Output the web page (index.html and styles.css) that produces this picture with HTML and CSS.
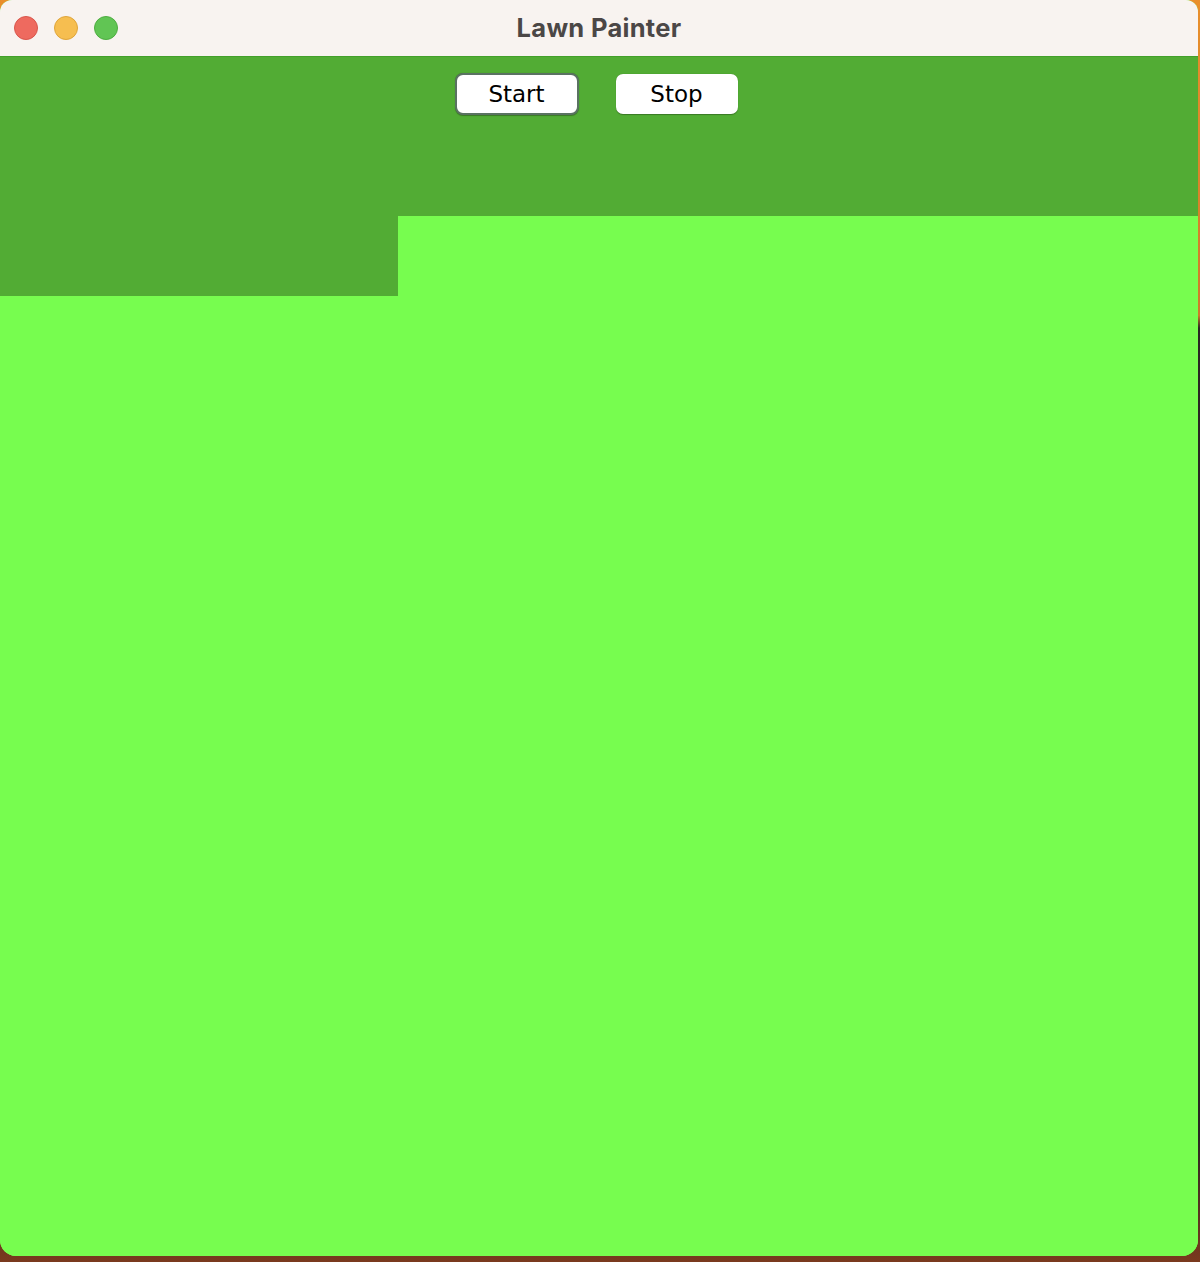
FILE: index.html
```html
<!DOCTYPE html>
<html>
<head>
<meta charset="utf-8">
<link rel="stylesheet" href="styles.css">
</head>
<body>
<div class="window">
  <div class="titlebar">
    <div class="lights">
      <span class="light red"></span>
      <span class="light yellow"></span>
      <span class="light green"></span>
    </div>
    <div class="title">Lawn Painter</div>
  </div>
  <div class="lawn">
    <div class="toolbar">
      <button class="btn focus">Start</button>
      <button class="btn">Stop</button>
    </div>
    <div class="row">
      <div class="mowed"></div>
      <div class="grass"></div>
    </div>
    <div class="rest"></div>
  </div>
</div>
</body>
</html>
```
FILE: styles.css
```css
html, body {
  margin: 0;
  padding: 0;
  width: 1200px;
  height: 1262px;
  overflow: hidden;
}
body {
  background: linear-gradient(180deg, #e98f2c 0%, #d07a2a 25%, #2a2624 26%, #2a2624 90%, #7a3a1e 100%);
  font-family: "Inter", "Liberation Sans", sans-serif;
}
.window {
  width: 1198px;
  height: 1256px;
  border-radius: 12px 12px 16px 16px;
  overflow: hidden;
  display: flex;
  flex-direction: column;
  background: #77fd4f;
}
.titlebar {
  height: 57px;
  flex: 0 0 57px;
  background: #f8f3f0;
  border-bottom: 1px solid #43a02a;
  box-sizing: border-box;
  position: relative;
  display: flex;
  align-items: center;
  justify-content: center;
}
.lights {
  position: absolute;
  left: 14px;
  top: 16px;
  display: flex;
  gap: 16px;
}
.light {
  width: 24px;
  height: 24px;
  border-radius: 50%;
  box-sizing: border-box;
}
.red { background: #ee6a5f; border: 1px solid #d9564c; }
.yellow { background: #f6be50; border: 1px solid #dfa53b; }
.green { background: #61c554; border: 1px solid #4ead41; }
.title {
  font-size: 25.5px;
  font-weight: 700;
  color: #4b4746;
  letter-spacing: 0.3px;
  margin-top: -2px;
}
.lawn {
  flex: 1;
  display: flex;
  flex-direction: column;
}
.toolbar {
  height: 159px;
  background: #52ac34;
  display: flex;
  justify-content: center;
  align-items: flex-start;
  gap: 37px;
  padding: 16px 6px 0 0;
  box-sizing: border-box;
}
.btn {
  width: 122px;
  height: 40px;
  background: #ffffff;
  border: none;
  border-radius: 7px;
  font-family: "DejaVu Sans", sans-serif;
  font-size: 23px;
  color: #000;
  padding: 0;
  box-shadow: 0 0.5px 1px rgba(0,0,0,0.3);
  margin-top: 1px;
}
.btn.focus {
  width: 124px;
  height: 42px;
  margin-top: 0;
  border: 2px solid #5a7262;
  border-radius: 8px;
}
.row {
  display: flex;
  height: 80px;
}
.mowed {
  width: 398px;
  background: #52ac34;
}
.grass {
  flex: 1;
  background: #77fd4f;
}
.rest {
  flex: 1;
  background: #77fd4f;
}
```
